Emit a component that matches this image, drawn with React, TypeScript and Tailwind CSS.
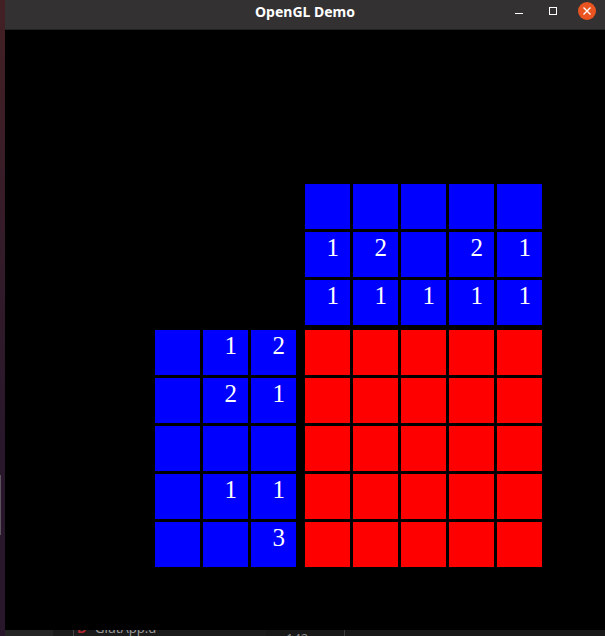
import React from "react";

const columnHints: string[][] = [
  ["", "", "", "", ""],
  ["1", "2", "", "2", "1"],
  ["1", "1", "1", "1", "1"],
];

const rowHints: string[][] = [
  ["", "1", "2"],
  ["", "2", "1"],
  ["", "", ""],
  ["", "1", "1"],
  ["", "", "3"],
];

const board: string[][] = Array.from({ length: 5 }, () => ["", "", "", "", ""]);

function CellGrid({ rows, color }: { rows: string[][]; color: string }) {
  return (
    <div className="flex flex-col gap-[3px]">
      {rows.map((row, r) => (
        <div key={r} className="flex gap-[3px]">
          {row.map((value, c) => (
            <div
              key={c}
              className={`h-[45px] w-[45px] pr-[11px] text-right text-[25px] leading-8 text-white ${color}`}
            >
              {value}
            </div>
          ))}
        </div>
      ))}
    </div>
  );
}

function TitleBar() {
  return (
    <header className="grid h-[30px] grid-cols-[1fr_auto_1fr] items-start border-b border-[#232323] bg-[#333132]">
      <span />
      <h1 className="font-['Noto_Sans',sans-serif] text-[14px] leading-6 font-bold text-white">
        OpenGL Demo
      </h1>
      <div className="flex h-[22px] items-center justify-end gap-4 pr-[9px]">
        <button aria-label="Minimize" className="flex h-[18px] w-[18px] items-center justify-center">
          <svg width="18" height="18" viewBox="0 0 18 18" fill="none" shapeRendering="crispEdges">
            <path d="M5 11.5h8" stroke="#fff" />
          </svg>
        </button>
        <button aria-label="Maximize" className="flex h-[18px] w-[18px] items-center justify-center">
          <svg width="18" height="18" viewBox="0 0 18 18" fill="none" shapeRendering="crispEdges">
            <rect x="5.5" y="5.5" width="7" height="7" stroke="#fff" />
          </svg>
        </button>
        <button
          aria-label="Close"
          className="flex h-[18px] w-[18px] items-center justify-center rounded-full bg-[#e95420]"
        >
          <svg width="18" height="18" viewBox="0 0 18 18" fill="none">
            <path d="M5.5 5.5l7 7M12.5 5.5l-7 7" stroke="#fff" strokeWidth="1.4" />
          </svg>
        </button>
      </div>
    </header>
  );
}

function EditorBehind() {
  return (
    <footer className="flex h-[6px] items-end overflow-hidden bg-[#181818] font-['Noto_Sans',sans-serif] text-[13px] leading-4">
      <div className="h-full w-12 bg-[#252525]" />
      <div className="h-full w-5 bg-[#1b1b1b]" />
      <div className="flex h-4 w-[193px] shrink-0 items-center border-l border-[#444] bg-[#1b1b1b] pl-[3px]">
        <span className="w-[18px] font-bold text-[#b0282e]">D</span>
        <span className="text-[#9a9a9a]">GlutApp.d</span>
      </div>
      <div className="h-full w-[79px] self-start border-r border-[#3a3a3a] pl-5 text-[#888]">
        142
      </div>
    </footer>
  );
}

export default function App() {
  return (
    <div className="flex min-h-screen bg-black">
      <aside className="flex w-[5px] shrink-0 items-end bg-linear-to-b from-[#432024] to-[#28172b] to-70% pb-[101px]">
        <div className="h-[60px] w-px bg-[#5b525c]" />
      </aside>
      <div className="flex min-w-0 flex-1 flex-col">
        <TitleBar />
        <main className="flex-1 px-[63px] pt-[154px] font-['Liberation_Serif',serif]">
          <div className="ml-auto grid w-max grid-cols-[auto_auto] gap-x-[9px] gap-y-[5px]">
            <div />
            <CellGrid rows={columnHints} color="bg-[#0000ff]" />
            <CellGrid rows={rowHints} color="bg-[#0000ff]" />
            <CellGrid rows={board} color="bg-[#ff0000]" />
          </div>
        </main>
        <EditorBehind />
      </div>
    </div>
  );
}
